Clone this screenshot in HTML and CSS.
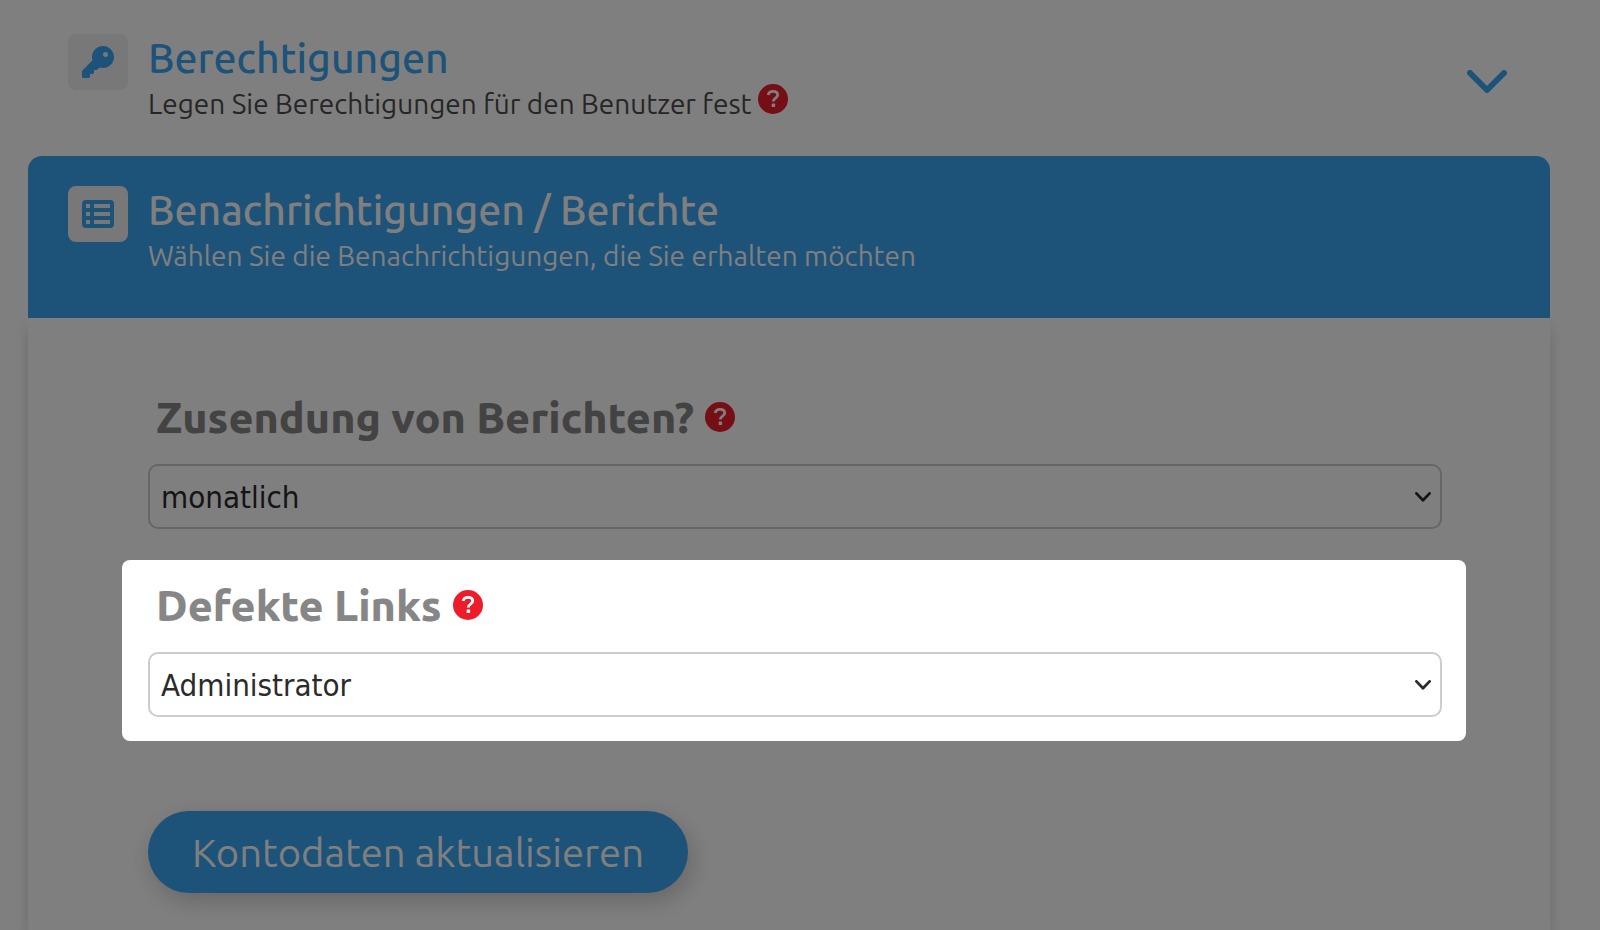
FILE: index.html
```html
<!DOCTYPE html>
<html lang="de">
<head>
    <meta charset="UTF-8">
    <meta name="viewport" content="width=device-width, initial-scale=1.0">
    <title>Benachrichtigungen / Berichte</title>
    <link rel="stylesheet" href="styles.css">
</head>
<body>
    <svg class="sprite" aria-hidden="true">
        <symbol id="icon-help" viewBox="0 0 30 30">
            <circle cx="15" cy="15" r="15" fill="#ed1c2b"/>
            <path d="M10.2 11C10.6 8.7 12.4 7.4 15 7.4c2.8 0 4.7 1.4 4.7 3.7 0 3.1-4.4 3.1-4.4 6.3" fill="none" stroke="#fff" stroke-width="2.8"/>
            <rect x="13.7" y="19.6" width="3.4" height="3.4" rx="0.6" fill="#fff"/>
        </symbol>
        <symbol id="icon-arrow" viewBox="0 0 16 10">
            <path d="M1.4 1.4L8 8.3l6.6-6.9" fill="none" stroke="#2b2b2b" stroke-width="2.8" stroke-linecap="round" stroke-linejoin="round"/>
        </symbol>
    </svg>

    <main class="accordion">
        <section class="panel">
            <div class="panel-header">
                <span class="panel-icon">
                    <svg width="32" height="32" viewBox="0 0 512 512" fill="currentColor" aria-hidden="true">
                        <path d="M336 352c97.2 0 176-78.8 176-176S433.2 0 336 0S160 78.8 160 176c0 18.7 2.9 36.8 8.3 53.7L7 391c-4.5 4.5-7 10.6-7 17v80c0 13.3 10.7 24 24 24h80c13.3 0 24-10.7 24-24V448h40c13.3 0 24-10.7 24-24V384h40c6.4 0 12.5-2.5 17-7l33.3-33.3c16.9 5.4 35 8.3 53.7 8.3zM376 96a40 40 0 1 1 0 80 40 40 0 1 1 0-80z"/>
                    </svg>
                </span>
                <div class="panel-text">
                    <h2>Berechtigungen</h2>
                    <p>Legen Sie Berechtigungen für den Benutzer fest
                        <button class="help" type="button" aria-label="Hilfe zu Berechtigungen"><svg><use href="#icon-help"/></svg></button>
                    </p>
                </div>
                <button class="toggle" type="button" aria-label="Berechtigungen öffnen">
                    <svg width="40" height="24" viewBox="0 0 40 24" fill="none" stroke="currentColor" stroke-width="6" stroke-linecap="round" stroke-linejoin="round" aria-hidden="true">
                        <path d="M3 3l17 17L37 3"/>
                    </svg>
                </button>
            </div>
        </section>

        <section class="panel open">
            <div class="panel-header">
                <span class="panel-icon">
                    <svg width="32" height="28" viewBox="0 0 32 28" aria-hidden="true">
                        <path fill="currentColor" fill-rule="evenodd" d="M4 0h24a4 4 0 0 1 4 4v20a4 4 0 0 1-4 4H4a4 4 0 0 1-4-4V4a4 4 0 0 1 4-4zM4 4v4h4V4zM12 4v4h16V4zM4 12v4h4v-4zM12 12v4h16v-4zM4 20v4h4v-4zM12 20v4h16v-4z"/>
                    </svg>
                </span>
                <div class="panel-text">
                    <h2>Benachrichtigungen / Berichte</h2>
                    <p>Wählen Sie die Benachrichtigungen, die Sie erhalten möchten</p>
                </div>
            </div>

            <form class="panel-body">
                <div class="field">
                    <div class="field-label">
                        <label for="reports">Zusendung von Berichten?</label>
                        <button class="help" type="button" aria-label="Hilfe zu Berichten"><svg><use href="#icon-help"/></svg></button>
                    </div>
                    <div class="select">
                        <select id="reports">
                            <option>monatlich</option>
                        </select>
                        <svg class="arrow"><use href="#icon-arrow"/></svg>
                    </div>
                </div>

                <div class="field spotlight">
                    <div class="field-label">
                        <label for="links">Defekte Links</label>
                        <button class="help" type="button" aria-label="Hilfe zu defekten Links"><svg><use href="#icon-help"/></svg></button>
                    </div>
                    <div class="select">
                        <select id="links">
                            <option>Administrator</option>
                        </select>
                        <svg class="arrow"><use href="#icon-arrow"/></svg>
                    </div>
                </div>

                <button class="submit" type="submit">Kontodaten aktualisieren</button>
            </form>
        </section>
    </main>
</body>
</html>
```
FILE: styles.css
```css
* {
    box-sizing: border-box;
}

html {
    height: 100%;
}

body {
    margin: 0;
    min-height: 100%;
    display: flex;
    background: #fff;
    color: #4c4c4c;
    font-family: Ubuntu, "Noto Sans", sans-serif;
    font-size: 28px;
    overflow-x: hidden;
}

.sprite {
    display: none;
}

button {
    font: inherit;
    border: none;
    padding: 0;
    background: none;
    cursor: pointer;
}

.accordion {
    flex: 1;
    display: flex;
    flex-direction: column;
    padding: 4px 50px 0 28px;
}

.panel-header {
    display: flex;
    align-items: flex-start;
    gap: 20px;
    padding: 30px 40px;
}

.panel-icon {
    flex: none;
    display: flex;
    align-items: center;
    justify-content: center;
    width: 60px;
    height: 56px;
    border-radius: 8px;
    background: #f0f0f0;
    color: #3aa4f2;
}

.panel-text {
    flex: 1;
}

.panel-text h2 {
    margin: 0;
    color: #3aa4f2;
    font-size: 41px;
    font-weight: 500;
    line-height: 48px;
}

.panel-text p {
    margin: 0;
    line-height: 44px;
}

.toggle {
    margin: 36px 3px 0 0;
    color: #3aa4f2;
    line-height: 0;
}

.help {
    width: 30px;
    height: 30px;
    border-radius: 50%;
    line-height: 0;
}

.help svg {
    display: block;
    width: 30px;
    height: 30px;
}

/* open panel */
.open {
    flex: 1;
    display: flex;
    flex-direction: column;
}

.open .panel-header {
    position: relative;
    padding-bottom: 40px;
    border-radius: 14px 14px 0 0;
    background: #3aa4f2;
}

.open h2,
.open p {
    color: #fff;
}

.panel-body {
    flex: 1;
    padding: 54px 84px 36px 94px;
    box-shadow: 0 10px 14px rgba(0, 0, 0, 0.15);
}

.field {
    margin-bottom: 7px;
    padding: 14px 24px 24px 26px;
    border-radius: 8px;
}

.field-label {
    display: flex;
    align-items: center;
    gap: 11px;
    height: 62px;
    margin-bottom: 16px;
    padding-left: 8px;
    color: #868686;
    font-size: 43px;
    font-weight: 800;
}

.select {
    display: grid;
    align-items: center;
}

.select select {
    grid-area: 1 / 1;
    width: 100%;
    height: 65px;
    padding: 0 48px 0 11px;
    border: 2px solid #ccc;
    border-radius: 10px;
    background: #fff;
    color: #2b2b2b;
    font-family: "DejaVu Sans Condensed", "Noto Sans", sans-serif;
    font-size: 31px;
    appearance: none;
}

.select .arrow {
    grid-area: 1 / 1;
    justify-self: end;
    width: 16px;
    height: 10px;
    margin-right: 11px;
    pointer-events: none;
}

/* everything around the highlighted field is dimmed */
.spotlight {
    position: relative;
    z-index: 10;
    box-shadow: 0 0 0 9999px rgba(0, 0, 0, 0.5);
}

.submit {
    height: 82px;
    margin: 63px 0 0 26px;
    padding: 0 44px;
    border-radius: 41px;
    background: #3aa4f2;
    color: #fff;
    font-size: 40px;
    box-shadow: 4px 8px 24px rgba(0, 0, 0, 0.2);
}
```
